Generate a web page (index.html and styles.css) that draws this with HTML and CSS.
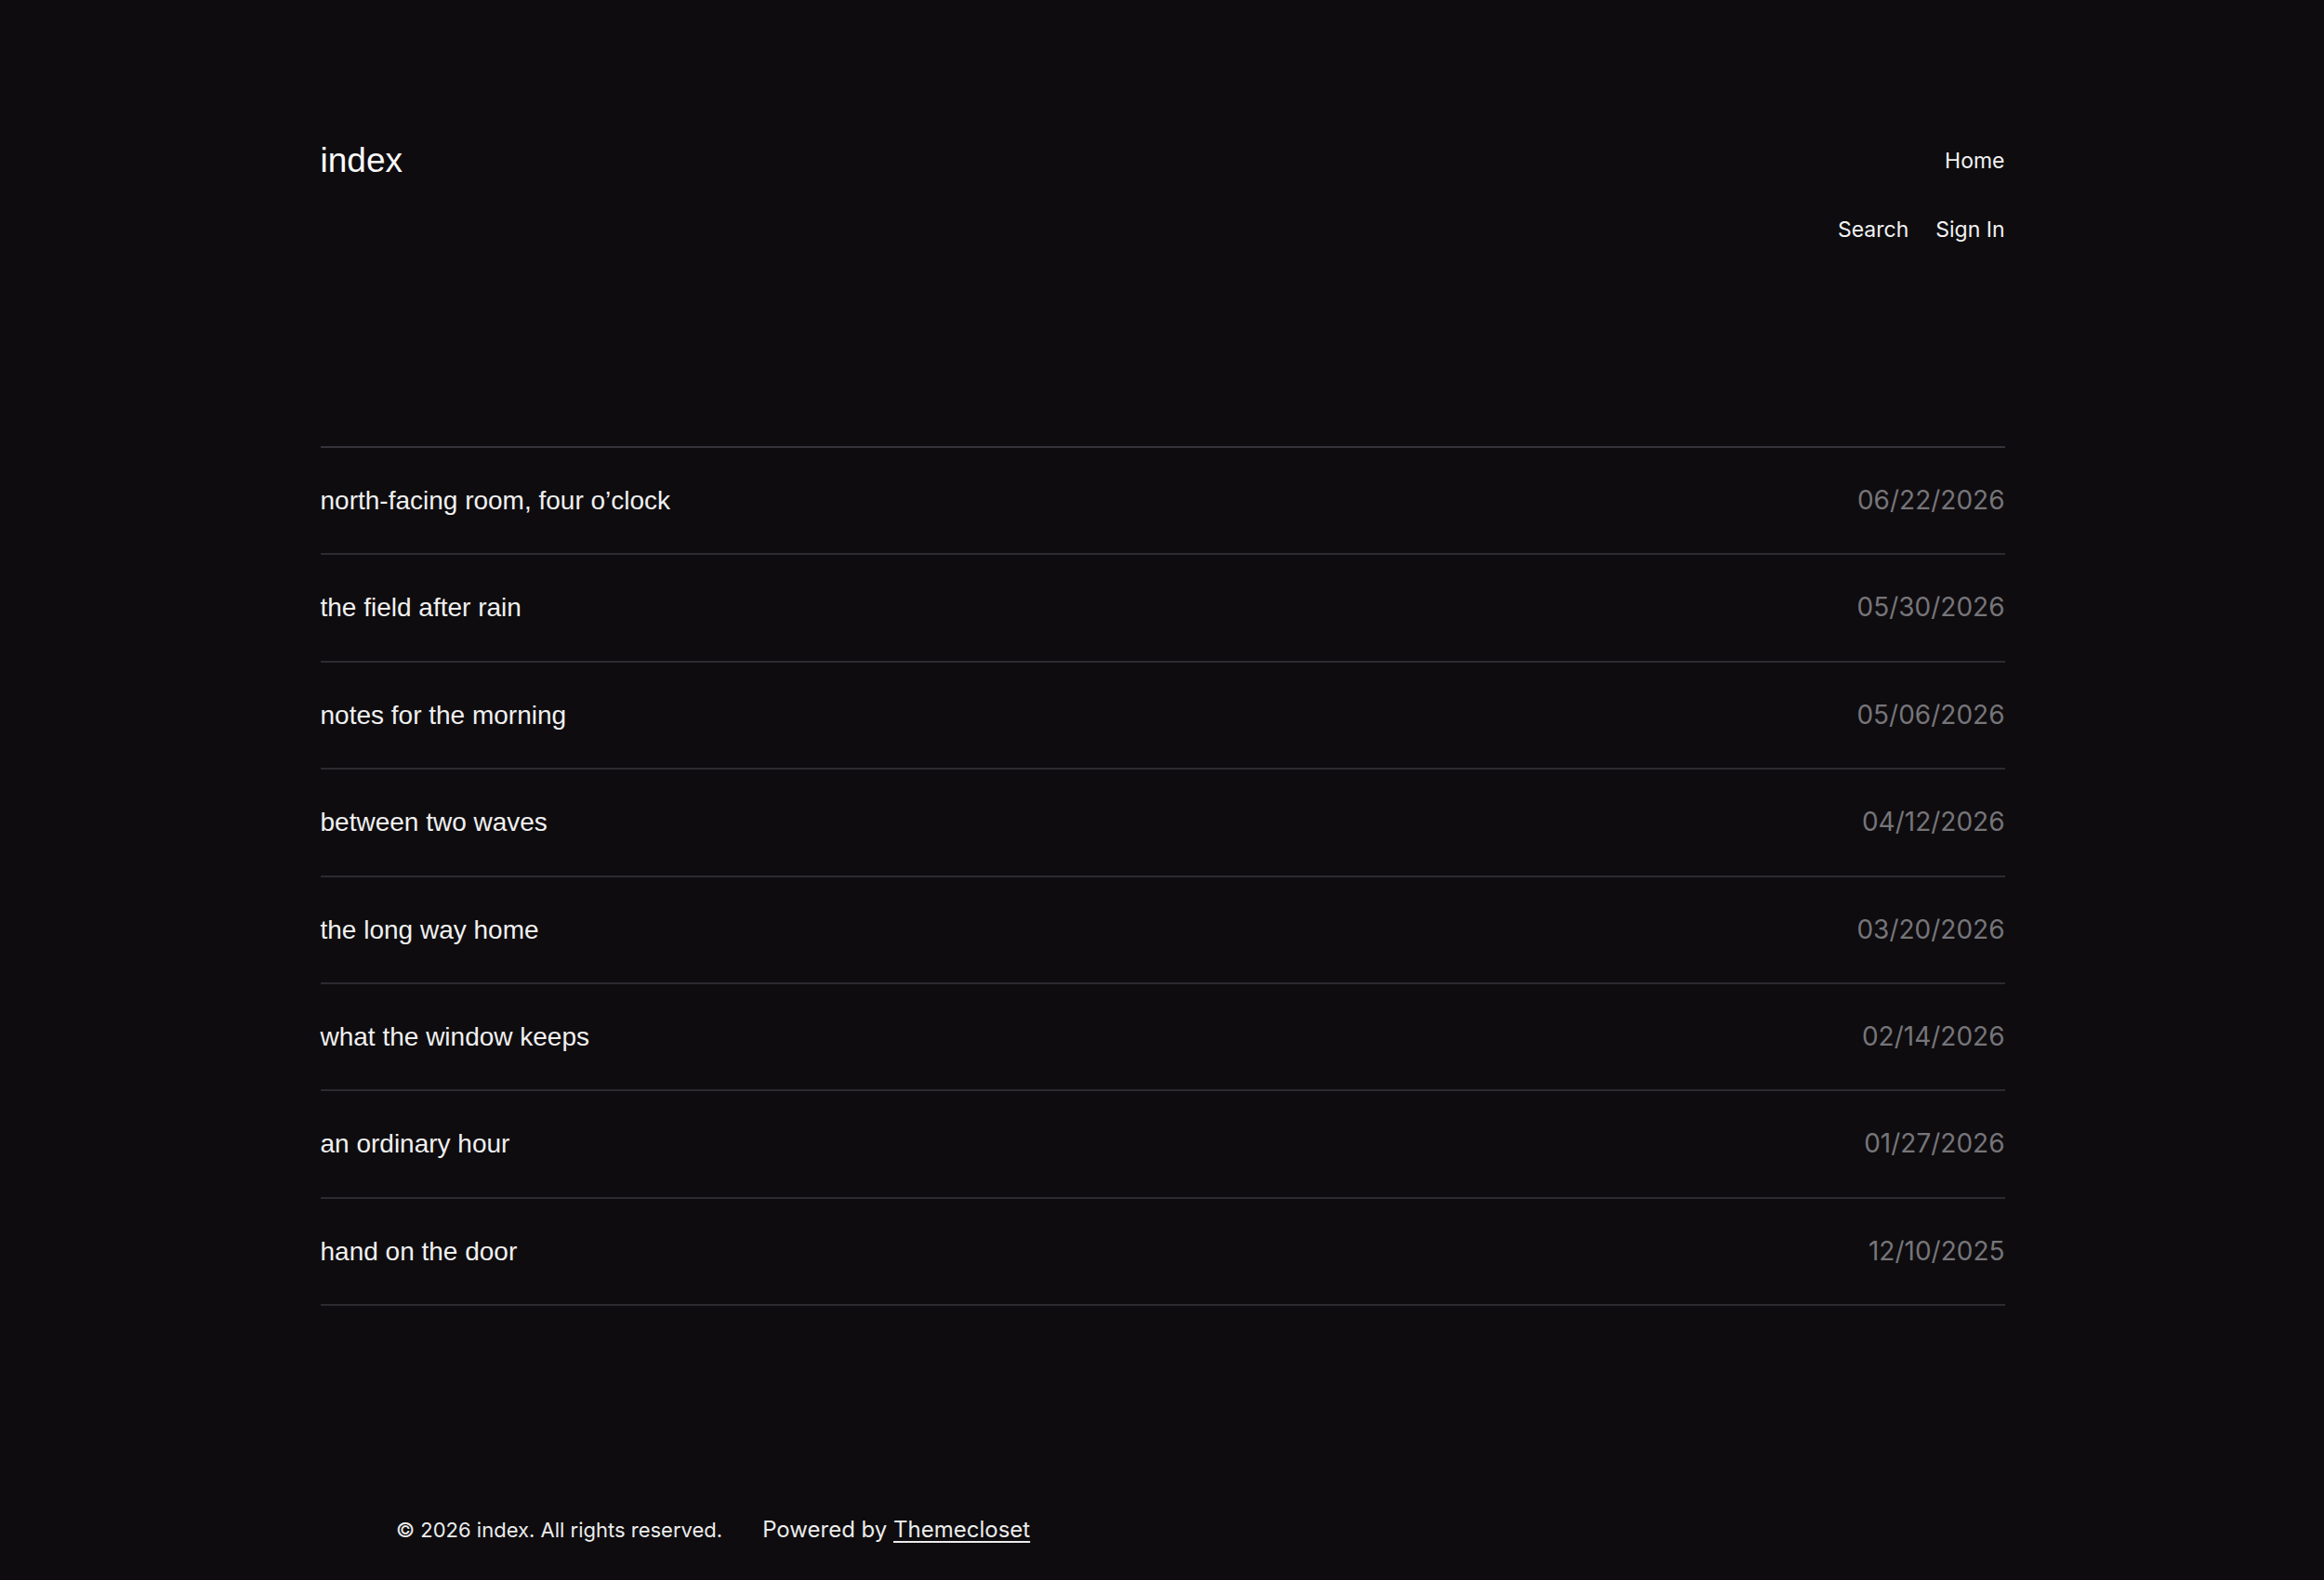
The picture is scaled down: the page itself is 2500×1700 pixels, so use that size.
FILE: index.html
```
<!DOCTYPE html>
<html lang="en">
<head>
    <meta charset="UTF-8">
    <meta name="viewport" content="width=device-width, initial-scale=1.0">
    <title>index</title>
    <link rel="stylesheet" href="styles.css">
</head>
<body>
    <div class="container">
        <header class="site-header">
            <a class="logo" href="#">index</a>
            <nav class="nav">
                <a href="#" class="nav-home">Home</a>
                <div class="nav-sub">
                    <a href="#">Search</a>
                    <a href="#">Sign In</a>
                </div>
            </nav>
        </header>

        <ul class="post-list">
            <li class="post"><a href="#" class="post-title">north-facing room, four o’clock</a><span class="post-date">06/22/2026</span></li>
            <li class="post"><a href="#" class="post-title">the field after rain</a><span class="post-date">05/30/2026</span></li>
            <li class="post"><a href="#" class="post-title">notes for the morning</a><span class="post-date">05/06/2026</span></li>
            <li class="post"><a href="#" class="post-title">between two waves</a><span class="post-date">04/12/2026</span></li>
            <li class="post"><a href="#" class="post-title">the long way home</a><span class="post-date">03/20/2026</span></li>
            <li class="post"><a href="#" class="post-title">what the window keeps</a><span class="post-date">02/14/2026</span></li>
            <li class="post"><a href="#" class="post-title">an ordinary hour</a><span class="post-date">01/27/2026</span></li>
            <li class="post"><a href="#" class="post-title">hand on the door</a><span class="post-date">12/10/2025</span></li>
        </ul>
    </div>

    <footer class="site-footer">
        <span class="copyright">© 2026 index. All rights reserved.</span>
        <span class="powered">Powered by <a href="#">Themecloset</a></span>
    </footer>
</body>
</html>
```

FILE: styles.css
```
*{margin:0;padding:0;box-sizing:border-box}
html,body{background:#0e0c0f}
body{color:#f2f2f2;font-family:"Liberation Sans",Arial,sans-serif;min-height:100vh;display:flex;flex-direction:column}
a{color:inherit;text-decoration:none}
.container{width:1813px;margin:0 auto;flex:1;padding-left:1px}
.site-header{display:flex;justify-content:space-between;align-items:flex-start;padding-top:151px;height:480px}
.logo{font-size:37px;line-height:1.2;color:#fafafa}
.nav{display:flex;flex-direction:column;align-items:flex-end;gap:46px;padding-top:9px;font-family:Inter,"Liberation Sans",sans-serif;font-size:23px;line-height:1.2}
.nav-sub{display:flex;gap:29px}
.post-list{list-style:none;border-top:2px solid #34343a}
.post{display:flex;justify-content:space-between;align-items:center;padding:40px 0;border-bottom:2px solid #2c2b30;font-size:28px;line-height:33.4px}
.post-title{color:#f0f0f0}
.post-date{font-family:Inter,"Liberation Sans",sans-serif;color:#767579}
.site-footer{display:flex;align-items:baseline;gap:43px;padding:0 0 39px 426px;font-family:Inter,"Liberation Sans",sans-serif;line-height:1.2;color:#ececec}
.copyright{font-size:22px}
.powered{font-size:24px}
.powered a{text-decoration:underline;text-underline-offset:4px}
```
